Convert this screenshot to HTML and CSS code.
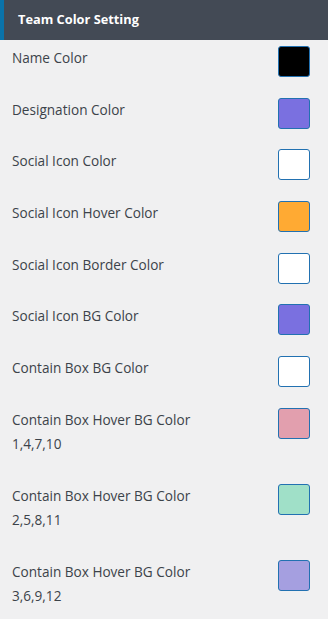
FILE: index.html
```html
<!DOCTYPE html>
<html lang="en">
<head>
    <meta charset="UTF-8">
    <meta name="viewport" content="width=device-width, initial-scale=1.0">
    <title>Team Color Setting</title>
    <link rel="stylesheet" href="styles.css">
</head>
<body>
    <div class="panel">
        <div class="panel-head">Team Color Setting</div>
        <div class="rows">
            <div class="row">
                <div class="label">Name Color</div>
                <span class="swatch" style="background:#000000"></span>
            </div>
            <div class="row">
                <div class="label">Designation Color</div>
                <span class="swatch" style="background:#7a70e0"></span>
            </div>
            <div class="row">
                <div class="label">Social Icon Color</div>
                <span class="swatch" style="background:#ffffff"></span>
            </div>
            <div class="row">
                <div class="label">Social Icon Hover Color</div>
                <span class="swatch" style="background:#ffaa33"></span>
            </div>
            <div class="row">
                <div class="label">Social Icon Border Color</div>
                <span class="swatch" style="background:#ffffff"></span>
            </div>
            <div class="row">
                <div class="label">Social Icon BG Color</div>
                <span class="swatch" style="background:#7a70e0"></span>
            </div>
            <div class="row">
                <div class="label">Contain Box BG Color</div>
                <span class="swatch" style="background:#ffffff"></span>
            </div>
            <div class="row">
                <div class="label label-multi">Contain Box Hover BG Color<br>1,4,7,10</div>
                <span class="swatch" style="background:#e29fae"></span>
            </div>
            <div class="row">
                <div class="label label-multi">Contain Box Hover BG Color<br>2,5,8,11</div>
                <span class="swatch" style="background:#a0e0c8"></span>
            </div>
            <div class="row">
                <div class="label label-multi">Contain Box Hover BG Color<br>3,6,9,12</div>
                <span class="swatch" style="background:#a59fe0"></span>
            </div>
        </div>
    </div>
</body>
</html>
```

FILE: styles.css
```css
body {
    margin: 0;
    background: #f0f0f1;
    font-family: "Open Sans", "Noto Sans", sans-serif;
    color: #3c434a;
}
.panel-head {
    height: 40px;
    line-height: 38px;
    background: #434a55;
    border-left: 4px solid #0a73aa;
    color: #ffffff;
    font-weight: bold;
    font-size: 12.8px;
    padding-left: 14px;
}
.rows {
    padding: 0 18px 0 12px;
}
.row {
    display: flex;
    justify-content: space-between;
    align-items: flex-start;
    padding: 10px 0 10.7px;
}
.row:first-child {
    padding-top: 6px;
}
.label {
    font-size: 13.6px;
    line-height: 24px;
}
.label-multi {
    margin-bottom: 7.3px;
}
.swatch {
    display: block;
    width: 30px;
    height: 29px;
    border: 1px solid #2271b1;
    border-radius: 3px;
}
```
